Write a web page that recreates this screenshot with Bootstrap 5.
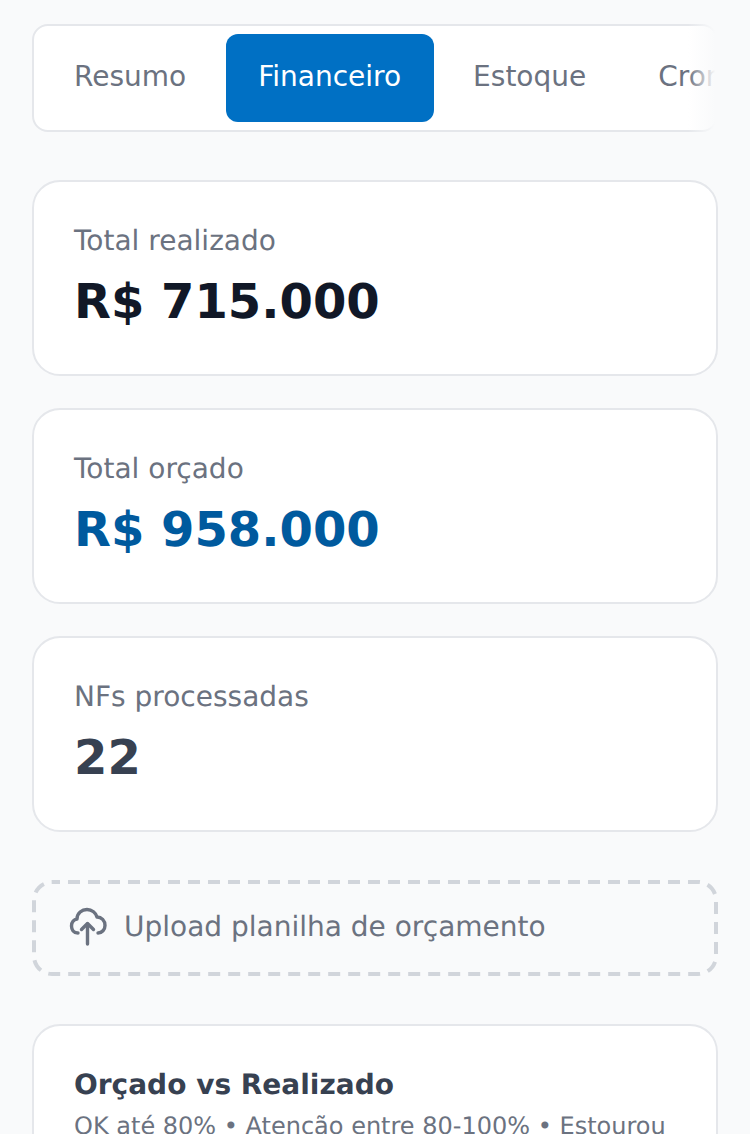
<!DOCTYPE html>
<html lang="pt-BR">
<head>
  <meta charset="UTF-8">
  <meta name="viewport" content="width=device-width, initial-scale=1.0">
  <title>Financeiro</title>
  <link href="https://cdn.jsdelivr.net/npm/bootstrap@5.3.0/dist/css/bootstrap.min.css" rel="stylesheet">
  <style>
    html, body { height: 100%; overflow: hidden; }
    body { background: #f9fafb; font-family: "DejaVu Sans", sans-serif; color: #374151; text-rendering: geometricPrecision; }
    .page-wrap { padding: 24px 32px 0; }
    .tab-strip { height: 108px; background: #fff; border: 2px solid #e5e7eb; border-radius: 16px; padding: 8px; overflow: hidden; }
    .tab-fade { top: -2px; bottom: -2px; right: -2px; width: 32px; background: linear-gradient(to right, rgba(249,250,251,0), #f9fafb 85%); }
    .tab-item { padding: 0 32px 2px; height: 88px; border: 0; border-radius: 12px; background: transparent; color: #6b7280; font-size: 28px; white-space: nowrap; flex-shrink: 0; }
    .tab-item.is-active { background: #0070c4; color: #fff; padding-right: 32.6px; margin-right: -0.6px; }
    .stat-box { height: 196px; background: #fff; border: 2px solid #e5e7eb; border-radius: 28px; padding: 40px 40px 0; margin-top: 32px; }
    .stat-box.first-box { margin-top: 48px; }
    .stat-label { font-size: 28px; line-height: 38px; color: #6b7280; }
    .stat-value { font-size: 48px; line-height: 60px; font-weight: 700; margin-top: 12px; }
    .upload-box { height: 96px; margin-top: 48px; padding: 0 30px 2px; gap: 10px; color: #6b7280; font-size: 28px; }
    .upload-line { top: 0; left: 0; }
    .chart-box { margin-top: 48px; background: #fff; border: 2px solid #e5e7eb; border-radius: 28px; padding: 40px; }
    .chart-title { font-size: 28px; line-height: 38px; font-weight: 700; color: #374151; }
    .chart-note { font-size: 24px; line-height: 32px; color: #6b7280; margin-top: 6px; }
  </style>
</head>
<body>
  <div class="page-wrap">
    <div class="position-relative">
      <div class="tab-strip d-flex gap-2">
        <button class="tab-item">Resumo</button>
        <button class="tab-item is-active">Financeiro</button>
        <button class="tab-item">Estoque</button>
        <button class="tab-item">Cronograma</button>
      </div>
      <div class="tab-fade position-absolute"></div>
    </div>

    <div class="stat-box first-box">
      <div class="stat-label">Total realizado</div>
      <div class="stat-value" style="color:#111827">R$ 715.000</div>
    </div>
    <div class="stat-box">
      <div class="stat-label">Total orçado</div>
      <div class="stat-value" style="color:#005a9e">R$ 958.000</div>
    </div>
    <div class="stat-box">
      <div class="stat-label">NFs processadas</div>
      <div class="stat-value" style="color:#374151">22</div>
    </div>

    <div class="upload-box position-relative d-flex align-items-center">
      <svg class="upload-line position-absolute" width="686" height="96" fill="none">
        <rect x="2" y="2" width="682" height="92" rx="18" stroke="#d1d5db" stroke-width="4" stroke-dasharray="12 8" stroke-dashoffset="4"/>
      </svg>
      <svg width="52" height="52" viewBox="0 0 52 52" fill="none" stroke="#6b7280" stroke-width="3.4" stroke-linecap="round" stroke-linejoin="round">
        <path d="M16 32C11.5 32 9.5 28.500 9.5 25C9.500 21 12 18.500 15 18C15 12 20 8.500 25 8.500C30 8.500 34 12 35 16C39.500 16 43 19.500 43 24.500C43 28.500 40 32 36 32"/>
        <path d="M25.500 43V23"/>
        <path d="M19.500 28.500L25.500 22.500L31.500 28.500"/>
      </svg>
      <span>Upload planilha de orçamento</span>
    </div>

    <div class="chart-box">
      <div class="chart-title">Orçado vs Realizado</div>
      <div class="chart-note">OK até 80% • Atenção entre 80-100% • Estourou acima de 100%</div>
    </div>
  </div>
</body>
</html>
